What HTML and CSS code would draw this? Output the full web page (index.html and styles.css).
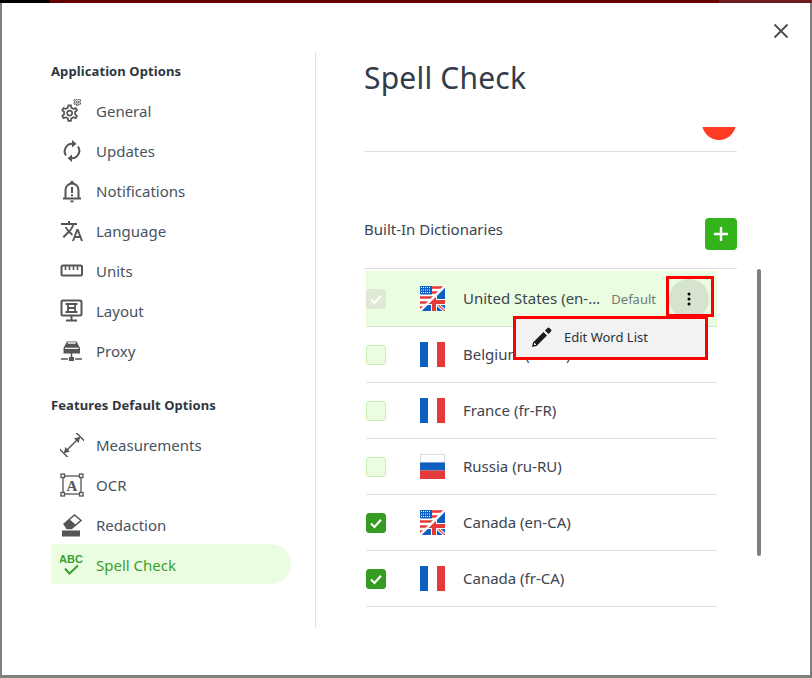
FILE: index.html
```html
<!DOCTYPE html>
<html lang="en">
<head>
<meta charset="utf-8">
<title>Spell Check</title>
<link rel="stylesheet" href="styles.css">
</head>
<body>
<svg class="defs" width="0" height="0" aria-hidden="true">
  <defs>
    <path id="gear" d="M19.43 12.98c.04-.32.07-.64.07-.98 0-.34-.03-.66-.07-.98l2.11-1.65c.19-.15.24-.42.12-.64l-2-3.46c-.09-.16-.26-.25-.44-.25-.06 0-.12.01-.17.03l-2.49 1c-.52-.4-1.08-.73-1.69-.98l-.38-2.65C14.46 2.18 14.25 2 14 2h-4c-.25 0-.46.18-.49.42l-.38 2.65c-.61.25-1.17.59-1.69.98l-2.49-1c-.06-.02-.12-.03-.18-.03-.17 0-.34.09-.43.25l-2 3.46c-.13.22-.07.49.12.64l2.11 1.65c-.04.32-.07.65-.07.98 0 .33.03.66.07.98l-2.11 1.65c-.19.15-.24.42-.12.64l2 3.46c.09.16.26.25.44.25.06 0 .12-.01.17-.03l2.49-1c.52.4 1.08.73 1.69.98l.38 2.65c.03.24.24.42.49.42h4c.25 0 .46-.18.49-.42l.38-2.65c.61-.25 1.17-.59 1.69-.98l2.49 1c.06.02.12.03.18.03.17 0 .34-.09.43-.25l2-3.46c.12-.22.07-.49-.12-.64l-2.11-1.65zm-1.98-1.71c.04.31.05.52.05.73 0 .21-.02.43-.05.73l-.14 1.13.89.7 1.08.84-.7 1.21-1.27-.51-1.04-.42-.9.68c-.43.32-.84.56-1.25.73l-1.06.43-.16 1.13-.2 1.35h-1.4l-.19-1.35-.16-1.13-1.06-.43c-.43-.18-.83-.41-1.23-.71l-.91-.7-1.06.43-1.27.51-.7-1.21 1.08-.84.89-.7-.14-1.13c-.03-.31-.05-.54-.05-.74s.02-.43.05-.73l.14-1.13-.89-.7-1.08-.84.7-1.21 1.27.51 1.04.42.9-.68c.43-.32.84-.56 1.25-.73l1.06-.43.16-1.13.2-1.35h1.39l.19 1.35.16 1.13 1.06.43c.43.18.83.41 1.23.71l.91.7 1.06-.43 1.27-.51.7 1.21-1.07.85-.89.7.14 1.13zM12 8c-2.21 0-4 1.79-4 4s1.79 4 4 4 4-1.79 4-4-1.79-4-4-4zm0 6c-1.1 0-2-.9-2-2s.9-2 2-2 2 .9 2 2-.9 2-2 2z"/>
    <symbol id="flag-fr" viewBox="0 0 25 25">
      <rect width="8" height="25" fill="#0d5fc0"/><rect x="8" width="9" height="25" fill="#fff"/><rect x="17" width="8" height="25" fill="#e43a3a"/>
    </symbol>
    <symbol id="flag-ru" viewBox="0 0 25 25">
      <rect x=".5" y=".5" width="24" height="8" fill="#fff" stroke="#ddd"/><rect y="8.5" width="25" height="8" fill="#0d5fc0"/><rect y="16.5" width="25" height="8.5" fill="#e43a3a"/>
    </symbol>
    <symbol id="flag-mix" viewBox="0 0 25 25">
      <clipPath id="us"><path d="M0 0H25L0 25Z"/></clipPath>
      <clipPath id="uk"><path d="M25 0V25H0Z"/></clipPath>
      <g clip-path="url(#uk)">
        <rect width="25" height="25" fill="#0d5fc0"/>
        <path d="M15 16 25 25" stroke="#fff" stroke-width="3.400" fill="none"/>
        <path d="M15 16 25 25" stroke="#e43a3a" stroke-width="1.200" fill="none"/>
        <rect x="11" y="4" width="6" height="21" fill="#fff"/><rect y="13" width="25" height="6" fill="#fff"/>
        <rect x="12" y="4" width="4" height="21" fill="#e43a3a"/><rect y="14" width="25" height="4" fill="#e43a3a"/>
      </g>
      <g clip-path="url(#us)">
        <rect width="25" height="25" fill="#fff"/>
        <path d="M0 1.500H25M0 6.500H25M0 11.500H25M0 16.500H25M0 21.500H25" stroke="#e43a3a" stroke-width="2.500"/>
        <rect width="12" height="8.500" fill="#0d5fc0"/>
        <path d="M1 1.500H11M1 4H11M1 6.500H11" stroke="#fff" stroke-width="1" stroke-dasharray="1 1"/>
      </g>
      <path d="M25 0 0 25" stroke="#fff" stroke-width="2.400"/>
    </symbol>
    <symbol id="pencil" viewBox="0 0 24 24">
      <path d="M3 17.500 2 22 6.500 21 17 10.500 13.500 7ZM4.500 17.800 6.200 19.500 5.700 19.900 4 20 4.100 18.300Z" fill="currentColor" fill-rule="evenodd"/>
      <path d="M15 5.500 18.500 9 21 6.500a1.400 1.400 0 0 0 0-2L19.500 3a1.400 1.400 0 0 0-2 0Z" fill="currentColor"/>
    </symbol>
  </defs>
</svg>

<div class="topstrip"><span class="strip-black"></span><span class="strip-red"></span><span class="strip-light"></span></div>

<main class="modal">
  <button class="close" type="button" aria-label="Close">
    <svg width="16" height="16" viewBox="0 0 16 16"><path d="M1.500 1.500 14.500 14.500M14.500 1.500 1.500 14.500" stroke="#4d4d4d" stroke-width="1.800" fill="none"/></svg>
  </button>

  <aside class="sidebar">
    <h2 class="side-heading">Application Options</h2>
    <nav class="nav">
      <a class="nav-item"><svg class="nav-icon" viewBox="0 0 24 24" fill="#555"><use href="#gear" transform="translate(-.7 3.800) scale(.86)"/><use href="#gear" transform="translate(12.500 -1.800) scale(.4)"/></svg><span>General</span></a>
      <a class="nav-item"><svg class="nav-icon" viewBox="0 0 24 24"><path d="M6 16.500A7.600 7.600 0 0 1 13 4.700M18 7.500A7.600 7.600 0 0 1 11 19.300" fill="none" stroke="#555" stroke-width="2"/><path d="M12 1 16.500 4.800 12 8.500ZM12 15.500 7.500 19.200 12 23Z" fill="#555"/></svg><span>Updates</span></a>
      <a class="nav-item"><svg class="nav-icon" viewBox="0 0 24 24"><path d="M3 19.500H21M5.500 19V11a6.500 6.500 0 0 1 13 0v8" fill="none" stroke="#555" stroke-width="2"/><circle cx="12" cy="3.500" r="1.700" fill="#555"/><path d="M10 21.500h4a2 2 0 0 1-4 0Z" fill="#555"/><path d="M12 8v6M12 15.200v2" stroke="#555" stroke-width="2"/></svg><span>Notifications</span></a>
      <a class="nav-item"><svg class="nav-icon" viewBox="0 0 24 24"><path d="M12.870 15.070l-2.540-2.510.030-.030c1.740-1.940 2.980-4.170 3.710-6.530H17V4h-7V2H8v2H1v1.990h11.170C11.500 7.920 10.440 9.750 9 11.350 8.070 10.320 7.300 9.190 6.690 8h-2c.73 1.630 1.730 3.170 2.980 4.560l-5.090 5.020L4 19l5-5 3.110 3.110.76-2.040zM18.500 10h-2L12 22h2l1.120-3h4.750L21 22h2l-4.500-12zm-2.620 7l1.620-4.330L19.120 17h-3.240z" fill="#555"/></svg><span>Language</span></a>
      <a class="nav-item"><svg class="nav-icon" viewBox="0 0 24 24"><rect x="1.500" y="6.500" width="20.500" height="10" rx="1.500" fill="none" stroke="#555" stroke-width="2"/><path d="M5.500 7v4M9.500 7v4M13.500 7v4M17.500 7v4" stroke="#555" stroke-width="1.600"/></svg><span>Units</span></a>
      <a class="nav-item"><svg class="nav-icon" viewBox="0 0 24 24"><rect x="1.500" y="1.500" width="20" height="15" rx="1.500" fill="none" stroke="#555" stroke-width="2"/><path d="M5.500 5H17.500M5.500 13H17.500M8 5V13M15 5V13M8 9H15" fill="none" stroke="#555" stroke-width="1.800"/><path d="M11.500 17v4M6 21.500H17" stroke="#555" stroke-width="2"/></svg><span>Layout</span></a>
      <a class="nav-item"><svg class="nav-icon" viewBox="0 0 24 24"><path d="M3.500 9 7 2.500H16.500L20 9V14.500H3.500Z" fill="#555"/><path d="M5 9.300H18.500" stroke="#fff" stroke-width="1.200"/><path d="M7.800 4H15.700" stroke="#fff" stroke-width="1.400"/><path d="M11.500 14v5M1 20H8M15 20H22" stroke="#555" stroke-width="1.500"/><rect x="9" y="18" width="5" height="4" fill="#555"/></svg><span>Proxy</span></a>
    </nav>

    <h2 class="side-heading second">Features Default Options</h2>
    <nav class="nav lower">
      <a class="nav-item"><svg class="nav-icon" viewBox="0 0 24 24"><path d="M4.500 19.500 19.500 4.500" stroke="#555" stroke-width="1.500"/><path d="M20 4 14 5.300 18.700 10ZM4 20 5.300 14 10 18.700Z" fill="#555"/><path d="M-.5 16 8 24.500M16 -.5 24.500 8" stroke="#555" stroke-width="1.500"/></svg><span>Measurements</span></a>
      <a class="nav-item"><svg class="nav-icon" viewBox="0 0 24 24"><rect x="3" y="3" width="18" height="18" fill="none" stroke="#555" stroke-width="1.300"/><g fill="#fff" stroke="#555" stroke-width="1.300"><rect x="1" y="1" width="3.500" height="3.500"/><rect x="19.500" y="1" width="3.500" height="3.500"/><rect x="1" y="19.500" width="3.500" height="3.500"/><rect x="19.500" y="19.500" width="3.500" height="3.500"/></g><text class="ocr-a" x="12" y="17.500" text-anchor="middle">A</text></svg><span>OCR</span></a>
      <a class="nav-item"><svg class="nav-icon" viewBox="0 0 24 24"><path d="M4 11 14.500 2 21 7.500 11.500 15.500H7Z" fill="#fff" stroke="#555" stroke-width="1.500"/><path d="M4 11 9.500 6.300 15.500 11.500 11.500 15.500H7Z" fill="#555"/><rect x="2" y="17.500" width="18" height="6" fill="#555"/></svg><span>Redaction</span></a>
      <a class="nav-item active"><svg class="nav-icon" viewBox="0 0 24 24"><text class="abc" x="11" y="9.500" text-anchor="middle">ABC</text><path d="M5 15.500 9.500 20.500 18 12.500" fill="none" stroke="#3a9f2c" stroke-width="2"/></svg><span>Spell Check</span></a>
    </nav>
  </aside>

  <section class="content">
    <h1 class="title">Spell Check</h1>

    <div class="clipped">
      <div class="toggle-clip"><div class="toggle-dot"></div></div>
    </div>

    <div class="dict-head">
      <span class="dict-title">Built-In Dictionaries</span>
      <button class="add" type="button" aria-label="Add">
        <svg width="18" height="18" viewBox="0 0 18 18"><path d="M9 2V16M2 9H16" stroke="#fff" stroke-width="2.400"/></svg>
      </button>
    </div>

    <div class="dict-list">
      <div class="row selected">
        <span class="check disabled"><svg width="14" height="14" viewBox="0 0 14 14"><path d="M2 7.500 5.500 11 12 3.800" fill="none" stroke="#fff" stroke-width="2.200"/></svg></span>
        <svg class="flag"><use href="#flag-mix"/></svg>
        <span class="name">United States (en-US)</span>
        <span class="default">Default</span>
        <button class="more" type="button" aria-label="More">
          <svg width="4" height="14" viewBox="0 0 4 14"><circle cx="2" cy="2" r="1.500"/><circle cx="2" cy="7" r="1.500"/><circle cx="2" cy="12" r="1.500"/></svg>
        </button>
        <span class="more-mark"></span>
        <div class="menu">
          <svg class="menu-icon"><use href="#pencil"/></svg>
          <span>Edit Word List</span>
        </div>
      </div>
      <div class="row">
        <span class="check"></span>
        <svg class="flag"><use href="#flag-fr"/></svg>
        <span class="name">Belgium (nl-BE)</span>
      </div>
      <div class="row">
        <span class="check"></span>
        <svg class="flag"><use href="#flag-fr"/></svg>
        <span class="name">France (fr-FR)</span>
      </div>
      <div class="row">
        <span class="check"></span>
        <svg class="flag"><use href="#flag-ru"/></svg>
        <span class="name">Russia (ru-RU)</span>
      </div>
      <div class="row">
        <span class="check on"><svg width="14" height="14" viewBox="0 0 14 14"><path d="M2 7.500 5.500 11 12 3.800" fill="none" stroke="#fff" stroke-width="2.200"/></svg></span>
        <svg class="flag"><use href="#flag-mix"/></svg>
        <span class="name">Canada (en-CA)</span>
      </div>
      <div class="row">
        <span class="check on"><svg width="14" height="14" viewBox="0 0 14 14"><path d="M2 7.500 5.500 11 12 3.800" fill="none" stroke="#fff" stroke-width="2.200"/></svg></span>
        <svg class="flag"><use href="#flag-fr"/></svg>
        <span class="name">Canada (fr-CA)</span>
      </div>
      <span class="scrollbar"></span>
    </div>
  </section>
</main>
</body>
</html>
```

FILE: styles.css
```css
* { box-sizing: border-box; }
html, body { margin: 0; height: 678px; overflow: hidden; }
body {
  background: #808080;
  font-family: "Noto Sans", "Open Sans", sans-serif;
  color: #3b4450;
}
.defs { position: absolute; }

.topstrip { display: flex; height: 3px; }
.strip-black { width: 50px; background: #000; }
.strip-red { flex: 1; background: #660000; }
.strip-light { width: 93px; background: #6e1c1c; }

.modal {
  position: relative;
  display: flex;
  width: 808px;
  height: 672px;
  margin-left: 2px;
  padding: 49px 0 0 49px;
  background: #fff;
}
.close {
  position: absolute;
  top: 20px;
  right: 21px;
  width: 16px;
  height: 16px;
  padding: 0;
  border: 0;
  background: none;
  display: flex;
}

.sidebar {
  width: 265px;
  height: 576px;
  padding-top: 9px;
  border-right: 1px solid #e0e0e0;
}
.side-heading {
  margin: 0 0 10px;
  font-size: 13px;
  line-height: 20px;
  font-weight: 700;
  letter-spacing: .1px;
  color: #2f3640;
}
.side-heading.second { margin-top: 24px; margin-bottom: 9px; }
.nav { display: flex; flex-direction: column; width: 240px; }
.nav-item {
  display: flex;
  align-items: center;
  gap: 12px;
  height: 40px;
  padding-left: 9px;
  font-size: 15px;
  color: #485260;
}
.nav.lower .nav-item { padding-top: 2px; }
.nav-icon { width: 24px; height: 24px; flex: none; }
.nav-item.active {
  background: #ebfde1;
  border-radius: 0 20px 20px 0;
  color: #3a9f2c;
}
.ocr-a { font: 700 15px "Liberation Serif", serif; fill: #555; }
.abc { font: 700 11px "Liberation Sans", sans-serif; fill: #3a9f2c; }

.content { width: 421px; padding: 6px 0 0 48px; }
.title {
  margin: 0 0 29px;
  font-size: 30px;
  line-height: 40px;
  font-weight: 400;
  letter-spacing: .2px;
  color: #333c48;
}
.clipped {
  display: flex;
  justify-content: flex-end;
  padding: 0 1px 11px 0;
  border-bottom: 1px solid #e0e0e0;
}
.toggle-clip { width: 34px; height: 13px; overflow: hidden; }
.toggle-dot {
  width: 34px;
  height: 34px;
  margin-top: -21px;
  border-radius: 50%;
  background: #ff3b26;
}
.dict-head {
  display: flex;
  justify-content: space-between;
  align-items: flex-start;
  padding: 66px 0 18px;
  border-bottom: 1px solid #e0e0e0;
}
.dict-title { font-size: 15px; line-height: 22px; }
.add {
  display: flex;
  align-items: center;
  justify-content: center;
  width: 32px;
  height: 32px;
  padding: 0;
  border: 0;
  border-radius: 4px;
  background: #34b31a;
}

.dict-list {
  position: relative;
  width: 351px;
  margin: 2px 0 0 2px;
}
.row {
  position: relative;
  display: flex;
  align-items: center;
  height: 56px;
  border-bottom: 1px solid #e0e0e0;
  font-size: 15px;
}
.row.selected { padding-right: 8px; background: #ebfde1; border-bottom-color: #d3e4c8; }
.check {
  display: flex;
  align-items: center;
  justify-content: center;
  flex: none;
  width: 20px;
  height: 20px;
  margin-right: 34px;
  border: 1px solid #c4edb1;
  border-radius: 3px;
  background: #ebfde1;
}
.check.disabled { background: #dde9d5; border-color: #dde9d5; }
.check.on { background: #349c22; border-color: #349c22; }
.flag { flex: none; width: 25px; height: 25px; margin-right: 18px; }
.name {
  flex: 1;
  min-width: 0;
  margin: 0 -3px 2px 0;
  white-space: nowrap;
  overflow: hidden;
  text-overflow: ellipsis;
}
.default { flex: none; margin-left: 13px; font-size: 13px; color: #6f7a72; }
.more {
  display: flex;
  align-items: center;
  justify-content: center;
  flex: none;
  width: 40px;
  height: 40px;
  margin-left: 13px;
  padding: 0;
  border: 0;
  border-radius: 50%;
  background: #d5e3cf;
}
.more-mark {
  position: absolute;
  top: 5px;
  right: 3px;
  width: 48px;
  height: 41px;
  border: 3px solid #f00;
}
.menu {
  position: absolute;
  top: 45px;
  left: 147px;
  display: flex;
  align-items: center;
  gap: 10px;
  width: 195px;
  height: 44px;
  padding: 0 0 2px 14px;
  border: 3px solid #f00;
  background: #f2f2f2;
  font-size: 13px;
  color: #2a3036;
  z-index: 2;
}
.menu-icon { width: 24px; height: 24px; color: #1a1a1a; }
.scrollbar {
  position: absolute;
  top: -2px;
  left: 391px;
  width: 4px;
  height: 287px;
  border-radius: 2px;
  background: #808080;
}
```
